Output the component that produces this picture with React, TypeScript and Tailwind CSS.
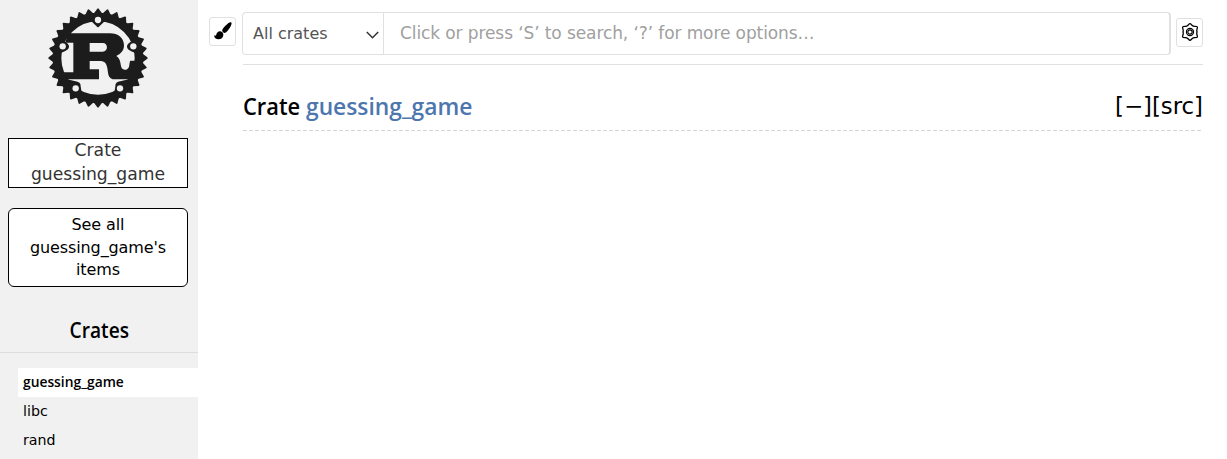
const TEETH = Array.from({ length: 32 }, (_, i) => i * 11.25);
const BOLTS = [
  [180, 60],
  [74, 139],
  [286, 139],
  [113, 265],
  [246, 265],
];

function RustLogo() {
  return (
    <svg viewBox="30 24 300 300" fill="#1c1c1c" className="mt-2 ml-12 size-[100px] shrink-0">
      {TEETH.map((angle) => (
        <path
          key={angle}
          d="M166 42 L178 26 Q180 24 182 26 L194 42Z"
          transform={`rotate(${angle} 180 174)`}
        />
      ))}
      <circle cx="180" cy="174" r="123" fill="none" stroke="#1c1c1c" strokeWidth="26" />
      <path d="M156 60 L178 81 Q180 83 182 81 L204 60Z" />
      <path d="M68 116 L86 128 Q96 136 92 144 Q90 151 70 158 L54 160Z" />
      <path d="M292 116 L274 128 Q264 136 268 144 Q270 151 290 158 L306 160Z" />
      <path d="M84 237 L119 245 Q126 247 127 253 L132 284 L106 284Z" />
      <path d="M276 237 L240 245 Q234 247 233 253 L228 284 L254 284Z" />
      <path
        fillRule="evenodd"
        d="M90 100 H216 C240 100 258 114 258 136 C258 152 248 162 235 168 C247 175 247 190 250 202 C253 212 270 212 273 200 C275 192 274 187 277 182 H296 L286 226 L274 238 H232 C207 238 212 219 207 200 C204 187 198 183 184 183 H155 V208 H183 V238 H84 L72 217 H106 V128 H82Z M155 129 V155 H194 C211 155 211 129 194 129Z"
      />
      {BOLTS.map(([cx, cy]) => (
        <circle key={`${cx}-${cy}`} cx={cx} cy={cy} r="9.500" fill="#f1f1f1" />
      ))}
    </svg>
  );
}

function Brush() {
  return (
    <svg width="18" height="18" viewBox="0 0 18 18" className="block">
      <path d="M17 .3c.9.7.7 2-.2 3.700-1 2-3.200 5.200-5 6.500-.8.600-1.700.500-2.500-.100-.9-.8-1.300-1.500-1-2.400.5-1.700 4.500-5.500 6.100-6.900C15.300.400 16.400-.1 17 .300z" />
      <path d="M6.300 9.200c1.700.2 3.500 2 3 4.200-.6 2.700-2.800 3.900-5 3.800-2 0-3.500-1-4.200-3.300 0-.6.3-.5.9-.3.800.2 1.200-.3 1.500-1.500.4-1.700 1.800-3.200 3.800-2.900z" />
    </svg>
  );
}

function Gear() {
  return (
    <svg width="18" height="18" viewBox="0 0 18 18" fill="none" stroke="#000" className="block">
      <path
        strokeWidth="1.300"
        strokeLinejoin="round"
        d="M7 2.200 Q8.600 .6 9 .6 Q9.400 .6 11 2.200 Q12.200 3.400 14 3.300 Q16.200 3.300 16.300 3.900 Q16.500 4.500 16 6.200 Q15.500 7.600 16 9 Q15.500 10.400 16 11.800 Q16.500 13.500 16.300 14.100 Q16.200 14.700 14 14.700 Q12.200 14.600 11 15.800 Q9.400 17.400 9 17.400 Q8.600 17.400 7 15.800 Q5.800 14.600 4 14.700 Q1.800 14.700 1.700 14.100 Q1.500 13.500 2 11.800 Q2.500 10.400 2 9 Q2.500 7.600 2 6.200 Q1.500 4.500 1.700 3.900 Q1.800 3.300 4 3.300 Q5.800 3.400 7 2.200Z"
      />
      <circle cx="9" cy="9" r="3.600" strokeWidth="1.100" />
      <circle cx="9" cy="9" r="2.200" strokeWidth="1.200" />
    </svg>
  );
}

export default function App() {
  return (
    <div className="flex h-[459px] w-full overflow-hidden bg-white font-['DejaVu_Sans',sans-serif] text-black">
      <aside className="flex w-[198px] shrink-0 flex-col bg-[#f1f1f1]">
        <RustLogo />
        <div className="mt-[30px] mr-[10px] ml-2 flex h-[50px] shrink-0 items-start justify-center border border-black bg-white text-center text-[17.200px] leading-6 text-[#333]">
          <span className="-mt-px w-[150px]">Crate guessing_game</span>
        </div>
        <a className="mt-5 mr-[10px] ml-2 h-[79px] shrink-0 rounded-md border border-black bg-white px-[10px] pt-[5px] text-center text-[16px] leading-[22.500px] tracking-[-0.1px]">
          See all guessing_game's items
        </a>
        <h3 className="mt-[29px] flex h-[37px] shrink-0 items-start justify-center border-b border-[#ddd] font-['Open_Sans',sans-serif] text-[20.800px] leading-7 font-semibold">
          <span className="inline-block origin-center scale-x-[0.92]">Crates</span>
        </h3>
        <nav className="mt-[15px] ml-[18px] text-[14.200px] leading-[29px]">
          <a className="block h-[29px] bg-white pl-[5px] font-['Open_Sans',sans-serif] text-[14.400px] leading-[27px] font-semibold">
            <span className="inline-block origin-left scale-x-[0.96]">guessing_game</span>
          </a>
          <a className="block h-[29px] pl-[5px]">libc</a>
          <a className="block h-[29px] pl-[5px]">rand</a>
        </nav>
      </aside>
      <main className="min-w-0 flex-1 pt-3 pr-6 pl-[11px]">
        <div className="flex h-[43px]">
          <button className="mt-[5px] flex h-[29px] w-[27px] items-start justify-center rounded-[3px] border border-[#e0e0e0] pt-[4px]">
            <Brush />
          </button>
          <div className="ml-[6px] flex min-w-0 flex-1 rounded border border-r-2 border-[#e0e0e0]">
            <div className="flex w-[141px] items-center justify-between border-r border-[#e0e0e0] pr-1 pl-[10px] text-[16px] text-[#555]">
              <span>All crates</span>
              <svg width="13" height="8" viewBox="0 0 13 8" fill="none" stroke="#333" strokeWidth="1.500" className="mt-[3px]">
                <path d="M.8 1 6.500 6.800 12.200 1" />
              </svg>
            </div>
            <div className="flex items-center pl-4 text-[17px] tracking-[-0.1px] text-[#a0a0a0]">
              Click or press ‘S’ to search, ‘?’ for more options…
            </div>
          </div>
          <button className="mt-[6px] ml-[5px] flex h-[29px] w-[27px] items-start justify-center rounded-[3px] border border-[#e0e0e0] pt-[4px]">
            <Gear />
          </button>
        </div>
        <div className="mt-[9px] ml-[34px] border-t border-[#e0e0e0]">
          <div className="flex h-[65px] items-center justify-between pt-[16px]">
            <h1 className="flex gap-[6px] font-['Open_Sans',sans-serif] text-[24px] leading-8 font-semibold whitespace-nowrap">
              <span className="w-[57px] origin-left scale-x-[0.91]">Crate</span>
              <span className="origin-left scale-x-[0.95] text-[#4d76ae]">guessing_game</span>
            </h1>
            <span className="text-[22.800px] leading-8">[−][src]</span>
          </div>
          <svg width="960" height="1" className="block">
            <path d="M0 .5H960" stroke="#d5d5d5" strokeDasharray="4 2" />
          </svg>
        </div>
      </main>
    </div>
  );
}
